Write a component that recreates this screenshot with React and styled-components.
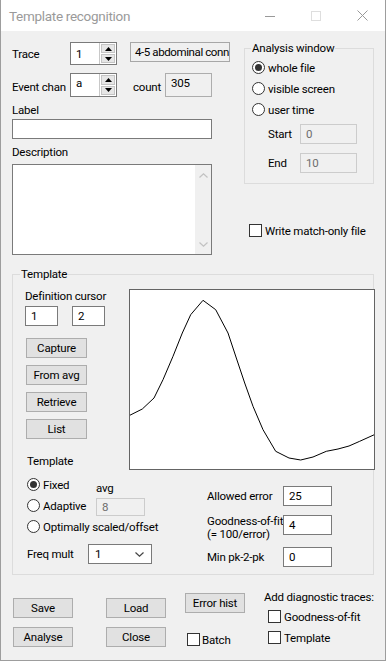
import styled, { createGlobalStyle } from "styled-components";

const GlobalStyle = createGlobalStyle`
  html, body { margin: 0; padding: 0; background: #f0f0f0; }
  body {
    font-family: Roboto, "Noto Sans", sans-serif;
    font-size: 11.5px;
    letter-spacing: -0.2px;
    line-height: 14px;
    color: #000;
  }
  * { box-sizing: border-box; }
`;

const curve = [
  [0, 126.7], [13.3, 120], [25, 109], [34, 90.7], [44, 67.3], [53.3, 44], [61.7, 25.7],
  [74, 11.3], [86.7, 20.7], [99, 44], [107.3, 69], [115.7, 94], [124, 117.3], [134, 140.7],
  [146.7, 162.3], [160, 169], [171.7, 171], [184, 168], [197.3, 162.3], [209, 160],
  [220, 157], [230.7, 152.3], [245.3, 145.7],
];

const Window = styled.div`
  width: 386px;
  height: 661px;
  display: flex;
  flex-direction: column;
  background: #f0f0f0;
  border: 1px solid #9d9d9d;
  border-top: none;
  overflow: hidden;
`;

const TitleBar = styled.div`
  flex: none;
  height: 31px;
  display: flex;
  align-items: center;
  padding-left: 8px;
  background: #fff;
`;

const Title = styled.div`
  flex: 1;
  font-size: 13.5px;
  letter-spacing: -0.3px;
  color: #9a9a9a;
`;

const CaptionButton = styled.div`
  width: 46px;
  height: 31px;
  display: flex;
  align-items: center;
  justify-content: center;
`;

const Body = styled.div`
  flex: 1;
  display: flex;
  flex-direction: column;
  padding-left: 11px;
`;

const TopSection = styled.div`
  display: flex;
  align-items: flex-start;
`;

const LeftCol = styled.div`
  width: 219px;
  display: flex;
  flex-direction: column;
`;

const Row = styled.div`
  display: flex;
  align-items: ${(p) => p.$align || "center"};
  height: ${(p) => p.$h}px;
  margin-top: ${(p) => p.$mt || 0}px;
  margin-left: ${(p) => p.$ml || 0}px;
  gap: ${(p) => p.$gap || 0}px;
`;

const FieldLabel = styled.span`
  flex: none;
  width: ${(p) => p.$w}px;
  margin-left: ${(p) => p.$ml || 0}px;
  padding-top: ${(p) => p.$pt || 0}px;
  white-space: nowrap;
  line-height: ${(p) => p.$lh || 14}px;
`;

const Caption = styled.div`
  margin-top: ${(p) => p.$mt || 0}px;
  margin-left: ${(p) => p.$ml || 0}px;
  white-space: nowrap;
`;

const Edit = styled.div`
  flex: none;
  width: ${(p) => p.$w}px;
  height: ${(p) => p.$h || 20}px;
  margin-top: ${(p) => p.$mt || 0}px;
  margin-left: ${(p) => p.$ml || 0}px;
  display: flex;
  align-items: ${(p) => (p.$top ? "flex-start" : "center")};
  padding: ${(p) => (p.$top ? "2px 5px 0" : "0 5px")};
  background: ${(p) => (p.$disabled || p.$readonly ? "#f0f0f0" : "#fff")};
  border: 1px solid ${(p) => (p.$disabled ? "#cccccc" : p.$readonly ? "#adadad" : "#7a7a7a")};
  color: ${(p) => (p.$disabled ? "#6d6d6d" : "#000")};
  white-space: nowrap;
  overflow: hidden;
`;

const InfoBox = styled.div`
  flex: none;
  width: 100px;
  height: 20px;
  margin-left: 13px;
  align-self: flex-start;
  display: flex;
  align-items: center;
  padding-left: 4px;
  background: #f0f0f0;
  border: 1px solid #a7a7a7;
  letter-spacing: -0.4px;
  white-space: nowrap;
  overflow: hidden;
`;

const Spin = styled.div`
  flex: none;
  display: flex;
  width: 47px;
  height: ${(p) => p.$h}px;
  border: 1px solid #7a7a7a;
  background: #fff;
`;

const SpinText = styled.div`
  flex: 1;
  display: flex;
  align-items: ${(p) => (p.$top ? "flex-start" : "center")};
  padding: ${(p) => (p.$top ? "2px 5px 0" : "0 5px")};
`;

const SpinButtons = styled.div`
  width: 17px;
  display: flex;
  flex-direction: column;
  gap: 1px;
  padding: 1px;
  border-left: 1px solid #c8c8c8;
`;

const SpinButton = styled.div`
  flex: 1;
  display: flex;
  align-items: center;
  justify-content: center;
  background: #e6e6e6;
  border: 1px solid #c4c4c4;
`;

const Memo = styled.div`
  width: 200px;
  height: 91px;
  margin-top: 5px;
  display: flex;
  justify-content: flex-end;
  background: #fff;
  border: 1px solid #7a7a7a;
`;

const ScrollBar = styled.div`
  width: 16px;
  display: flex;
  flex-direction: column;
  justify-content: space-between;
  align-items: center;
  padding: 8px 0 7px;
  background: #f0f0f0;
`;

const RightCol = styled.div`
  width: 130px;
  margin-left: 13px;
  display: flex;
  flex-direction: column;
`;

const GroupBox = styled.div`
  position: relative;
  width: ${(p) => p.$w}px;
  height: ${(p) => p.$h}px;
  margin-top: ${(p) => p.$mt || 0}px;
  padding: ${(p) => p.$pad};
  border: 1px solid #dcdcdc;
  display: flex;
  flex-direction: column;
`;

const GroupCaption = styled.span`
  position: absolute;
  top: -8px;
  left: ${(p) => p.$left}px;
  padding: 0 1px;
  background: #f0f0f0;
  white-space: nowrap;
`;

const Choice = styled.div`
  display: flex;
  align-items: center;
  gap: 3px;
  height: 21px;
  margin-top: ${(p) => p.$mt || 0}px;
  white-space: nowrap;
`;

const RadioDot = styled.span`
  flex: none;
  width: 13px;
  height: 13px;
  border: 1px solid #333;
  border-radius: 50%;
  background: #fff;
  display: flex;
  align-items: center;
  justify-content: center;

  &::after {
    content: "";
    width: 7px;
    height: 7px;
    border-radius: 50%;
    background: ${(p) => (p.$on ? "#333" : "transparent")};
  }
`;

const CheckBox = styled.span`
  flex: none;
  width: 13px;
  height: 13px;
  border: 1px solid #333;
  background: #fff;
`;

const CheckRow = styled.div`
  display: flex;
  align-items: center;
  gap: ${(p) => p.$gap || 3}px;
  height: 13px;
  margin-top: ${(p) => p.$mt || 0}px;
  margin-left: ${(p) => p.$ml || 0}px;
  white-space: nowrap;
`;

const TemplateRow = styled.div`
  display: flex;
  align-items: flex-start;
`;

const Panel = styled.div`
  display: flex;
  flex-direction: column;
  width: ${(p) => p.$w}px;
  margin-left: ${(p) => p.$ml || 0}px;
  margin-top: ${(p) => p.$mt || 0}px;
`;

const ButtonStack = styled.div`
  display: flex;
  flex-direction: column;
  gap: ${(p) => p.$gap}px;
  margin-top: ${(p) => p.$mt || 0}px;
  margin-left: ${(p) => p.$ml || 0}px;
`;

const Button = styled.div`
  width: ${(p) => p.$w || 60}px;
  height: 20px;
  display: flex;
  align-items: center;
  justify-content: center;
  background: #e1e1e1;
  border: 1px solid #adadad;
  white-space: nowrap;
`;

const Chart = styled.div`
  width: 246px;
  height: 181px;
  margin-right: -2px;
  background: #fff;
  border: 1px solid #646464;
  flex: none;

  svg {
    display: block;
  }
`;

const Combo = styled.div`
  width: 64px;
  height: 20px;
  display: flex;
  align-items: center;
  justify-content: space-between;
  padding: 0 7px 0 6px;
  background: #fff;
  border: 1px solid #7a7a7a;
`;

const BottomRow = styled.div`
  display: flex;
  align-items: flex-start;
`;

const Radio = ({ on, children, mt }) => (
  <Choice $mt={mt}>
    <RadioDot $on={on} />
    {children}
  </Choice>
);

const Check = ({ children, mt, ml, gap }) => (
  <CheckRow $mt={mt} $ml={ml} $gap={gap}>
    <CheckBox />
    {children}
  </CheckRow>
);

const SpinEdit = ({ value, h, top }) => (
  <Spin $h={h}>
    <SpinText $top={top}>{value}</SpinText>
    <SpinButtons>
      <SpinButton>
        <svg width="7" height="4" viewBox="0 0 7 4"><path d="M0 4L3.5 0L7 4Z" fill="#000" /></svg>
      </SpinButton>
      <SpinButton>
        <svg width="7" height="4" viewBox="0 0 7 4"><path d="M0 0L3.5 4L7 0Z" fill="#000" /></svg>
      </SpinButton>
    </SpinButtons>
  </Spin>
);

const Chevron = ({ up, color = "#c2c2c2" }) => (
  <svg width="9" height="5" viewBox="0 0 9 5">
    <path d={up ? "M0.5 4.5L4.5 0.8L8.5 4.5" : "M0.5 0.5L4.5 4.2L8.5 0.5"} fill="none" stroke={color} strokeWidth="1.2" />
  </svg>
);

export default function App() {
  return (
    <>
      <GlobalStyle />
      <Window>
        <TitleBar>
          <Title>Template recognition</Title>
          <CaptionButton>
            <svg width="10" height="10" viewBox="0 0 10 10"><path d="M0 5.5H10" stroke="#999" /></svg>
          </CaptionButton>
          <CaptionButton>
            <svg width="10" height="10" viewBox="0 0 10 10"><rect x="0.5" y="0.5" width="9" height="9" fill="none" stroke="#dedede" /></svg>
          </CaptionButton>
          <CaptionButton>
            <svg width="11" height="11" viewBox="0 0 11 11"><path d="M0.5 0.5L10.5 10.5M10.5 0.5L0.5 10.5" stroke="#999" /></svg>
          </CaptionButton>
        </TitleBar>

        <Body>
          <TopSection>
            <LeftCol>
              <Row $h={23} $mt={11}>
                <FieldLabel $w={58}>Trace</FieldLabel>
                <SpinEdit value="1" h={23} />
                <InfoBox>4-5 abdominal conn</InfoBox>
              </Row>
              <Row $h={24} $mt={8}>
                <FieldLabel $w={58} $pt={3}>Event chan</FieldLabel>
                <SpinEdit value="a" h={24} top />
                <FieldLabel $w={32} $ml={16} $pt={3}>count</FieldLabel>
                <Edit $w={47} $h={24} $readonly $top>305</Edit>
              </Row>
              <Caption $mt={6}>Label</Caption>
              <Edit $w={200} $mt={2} />
              <Caption $mt={6}>Description</Caption>
              <Memo>
                <ScrollBar>
                  <Chevron up />
                  <Chevron />
                </ScrollBar>
              </Memo>
            </LeftCol>

            <RightCol>
              <GroupBox $w={130} $h={136} $mt={17} $pad="8px 0 0 7px">
                <GroupCaption $left={6}>Analysis window</GroupCaption>
                <Radio on>whole file</Radio>
                <Radio>visible screen</Radio>
                <Radio>user time</Radio>
                <Row $h={20} $mt={4} $ml={16}>
                  <FieldLabel $w={32}>Start</FieldLabel>
                  <Edit $w={57} $disabled>0</Edit>
                </Row>
                <Row $h={20} $mt={9} $ml={16}>
                  <FieldLabel $w={32}>End</FieldLabel>
                  <Edit $w={57} $disabled>10</Edit>
                </Row>
              </GroupBox>
              <Check mt={40} ml={5} gap={3}>Write match-only file</Check>
            </RightCol>
          </TopSection>

          <GroupBox $w={362} $h={301} $mt={19} $pad="14px 0 0 12px">
            <GroupCaption $left={7}>Template</GroupCaption>
            <TemplateRow>
              <Panel $w={104}>
                <Caption>Definition cursor</Caption>
                <Row $h={20} $mt={3} $gap={14}>
                  <Edit $w={33}>1</Edit>
                  <Edit $w={33}>2</Edit>
                </Row>
                <ButtonStack $gap={7} $mt={12} $ml={1}>
                  <Button $w={61}>Capture</Button>
                  <Button $w={61}>From avg</Button>
                  <Button $w={61}>Retrieve</Button>
                  <Button $w={61}>List</Button>
                </ButtonStack>
                <Caption $mt={15} $ml={2}>Template</Caption>
              </Panel>
              <Chart>
                <svg width="244" height="179" viewBox="1 1 244 179">
                  <polyline
                    points={curve.map(([x, y]) => `${x},${y}`).join(" ")}
                    fill="none"
                    stroke="#000"
                    strokeWidth="1"
                  />
                </svg>
              </Chart>
            </TemplateRow>

            <TemplateRow>
              <Panel $w={180} $ml={2}>
                <Row $h={42} $align="flex-start">
                  <Panel $w={69} $mt={4}>
                    <Radio on>Fixed</Radio>
                    <Radio>Adaptive</Radio>
                  </Panel>
                  <Panel $w={60} $mt={11}>
                    <Caption>avg</Caption>
                    <Edit $w={49} $h={18} $mt={3} $disabled>8</Edit>
                  </Panel>
                </Row>
                <Radio mt={4}>Optimally scaled/offset</Radio>
                <Row $h={20} $mt={7}>
                  <FieldLabel $w={61}>Freq mult</FieldLabel>
                  <Combo>
                    1
                    <Chevron color="#444" />
                  </Combo>
                </Row>
              </Panel>
              <Panel $w={130}>
                <Row $h={20} $mt={16}>
                  <FieldLabel $w={76}>Allowed error</FieldLabel>
                  <Edit $w={49}>25</Edit>
                </Row>
                <Row $h={26} $mt={9} $align="flex-start">
                  <FieldLabel $w={76} $lh={13}>
                    Goodness-of-fit
                    <br />
                    (= 100/error)
                  </FieldLabel>
                  <Edit $w={49}>4</Edit>
                </Row>
                <Row $h={20} $mt={6}>
                  <FieldLabel $w={76}>Min pk-2-pk</FieldLabel>
                  <Edit $w={49}>0</Edit>
                </Row>
              </Panel>
            </TemplateRow>
          </GroupBox>

          <BottomRow>
            <ButtonStack $gap={9} $mt={23} $ml={1}>
              <Button>Save</Button>
              <Button>Analyse</Button>
            </ButtonStack>
            <ButtonStack $gap={9} $mt={23} $ml={33}>
              <Button>Load</Button>
              <Button>Close</Button>
            </ButtonStack>
            <Panel $w={60} $ml={19} $mt={18}>
              <Button>Error hist</Button>
              <Check mt={20} ml={2} gap={2}>Batch</Check>
            </Panel>
            <Panel $w={120} $ml={19} $mt={15}>
              <Caption>Add diagnostic traces:</Caption>
              <Check mt={6} ml={4} gap={3}>Goodness-of-fit</Check>
              <Check mt={8} ml={4} gap={3}>Template</Check>
            </Panel>
          </BottomRow>
        </Body>
      </Window>
    </>
  );
}
